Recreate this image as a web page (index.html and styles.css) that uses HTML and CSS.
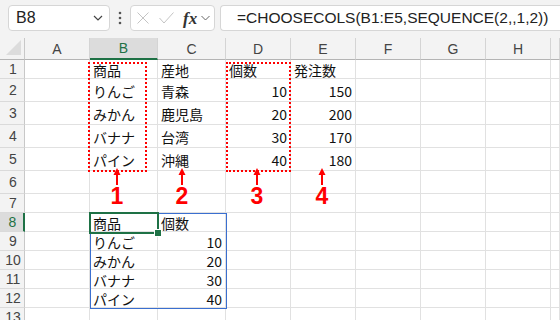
FILE: index.html
```html
<!DOCTYPE html>
<html>
<head>
    <title>CHOOSECOLS</title>
    <link rel="stylesheet" href="styles.css">
</head>
<body>
    <div class="app">
        <!-- formula bar -->
        <div class="formula-bar">
            <div class="name-box">
                <span>B8</span>
                <svg width="10" height="6" viewBox="0 0 10 6"><polyline points="1,1 5,5 9,1" fill="none" stroke="#444" stroke-width="1.2"/></svg>
            </div>
            <div class="grip">
                <svg width="4" height="14" viewBox="0 0 4 14"><circle cx="2" cy="2" r="1.3" fill="#555"/><circle cx="2" cy="7" r="1.3" fill="#555"/><circle cx="2" cy="12" r="1.3" fill="#555"/></svg>
            </div>
            <div class="fx-box">
                <svg class="icon-x" width="12" height="12" viewBox="0 0 12 12"><path d="M0.5 0.5 L11.5 11.5 M11.5 0.5 L0.5 11.5" stroke="#c4c4c4" stroke-width="1"/></svg>
                <svg class="icon-ok" width="15" height="12" viewBox="0 0 15 12"><polyline points="0.5,6 5,11 14.5,0.5" fill="none" stroke="#c4c4c4" stroke-width="1"/></svg>
                <span class="fx">fx</span>
                <svg width="9" height="6" viewBox="0 0 9 6"><polyline points="0.5,1 4.5,5 8.5,1" fill="none" stroke="#666" stroke-width="1"/></svg>
            </div>
            <div class="formula-input">=CHOOSECOLS(B1:E5,SEQUENCE(2,,1,2))</div>
        </div>

        <!-- sheet -->
        <div class="sheet">
            <div class="corner"><svg width="15" height="15" viewBox="0 0 15 15"><polygon points="15,0 15,15 0,15" fill="#dcdcdc"/></svg></div>
            <div class="ch">A</div><div class="ch ch-active">B</div><div class="ch">C</div><div class="ch">D</div><div class="ch">E</div><div class="ch">F</div><div class="ch">G</div><div class="ch">H</div><div class="ch"></div>

            <div class="rh">1</div><div class="cell"></div><div class="cell">商品</div><div class="cell">産地</div><div class="cell">個数</div><div class="cell">発注数</div><div class="cell"></div><div class="cell"></div><div class="cell"></div><div class="cell"></div>
            <div class="rh">2</div><div class="cell"></div><div class="cell">りんご</div><div class="cell">青森</div><div class="cell num">10</div><div class="cell num">150</div><div class="cell"></div><div class="cell"></div><div class="cell"></div><div class="cell"></div>
            <div class="rh">3</div><div class="cell"></div><div class="cell">みかん</div><div class="cell">鹿児島</div><div class="cell num">20</div><div class="cell num">200</div><div class="cell"></div><div class="cell"></div><div class="cell"></div><div class="cell"></div>
            <div class="rh">4</div><div class="cell"></div><div class="cell">バナナ</div><div class="cell">台湾</div><div class="cell num">30</div><div class="cell num">170</div><div class="cell"></div><div class="cell"></div><div class="cell"></div><div class="cell"></div>
            <div class="rh">5</div><div class="cell"></div><div class="cell">パイン</div><div class="cell">沖縄</div><div class="cell num">40</div><div class="cell num">180</div><div class="cell"></div><div class="cell"></div><div class="cell"></div><div class="cell"></div>
            <div class="rh">6</div><div class="cell"></div><div class="cell"></div><div class="cell"></div><div class="cell"></div><div class="cell"></div><div class="cell"></div><div class="cell"></div><div class="cell"></div><div class="cell"></div>
            <div class="rh">7</div><div class="cell"></div><div class="cell"></div><div class="cell"></div><div class="cell"></div><div class="cell"></div><div class="cell"></div><div class="cell"></div><div class="cell"></div><div class="cell"></div>
            <div class="rh rh-active">8</div><div class="cell"></div><div class="cell">商品</div><div class="cell">個数</div><div class="cell"></div><div class="cell"></div><div class="cell"></div><div class="cell"></div><div class="cell"></div><div class="cell"></div>
            <div class="rh">9</div><div class="cell"></div><div class="cell">りんご</div><div class="cell num">10</div><div class="cell"></div><div class="cell"></div><div class="cell"></div><div class="cell"></div><div class="cell"></div><div class="cell"></div>
            <div class="rh">10</div><div class="cell"></div><div class="cell">みかん</div><div class="cell num">20</div><div class="cell"></div><div class="cell"></div><div class="cell"></div><div class="cell"></div><div class="cell"></div><div class="cell"></div>
            <div class="rh">11</div><div class="cell"></div><div class="cell">バナナ</div><div class="cell num">30</div><div class="cell"></div><div class="cell"></div><div class="cell"></div><div class="cell"></div><div class="cell"></div><div class="cell"></div>
            <div class="rh">12</div><div class="cell"></div><div class="cell">パイン</div><div class="cell num">40</div><div class="cell"></div><div class="cell"></div><div class="cell"></div><div class="cell"></div><div class="cell"></div><div class="cell"></div>
            <div class="rh">13</div><div class="cell"></div><div class="cell"></div><div class="cell"></div><div class="cell"></div><div class="cell"></div><div class="cell"></div><div class="cell"></div><div class="cell"></div><div class="cell"></div>

            <!-- annotations over the grid -->
            <div class="dotted-box box-b"></div>
            <div class="dotted-box box-d"></div>

            <div class="marker m1"><svg width="10" height="17" viewBox="0 0 10 17"><polygon points="5,0 1.5,7 8.5,7" fill="#ff0000"/><line x1="5" y1="5" x2="5" y2="17" stroke="#ff0000" stroke-width="2"/></svg><span>1</span></div>
            <div class="marker m2"><svg width="10" height="17" viewBox="0 0 10 17"><polygon points="5,0 1.5,7 8.5,7" fill="#ff0000"/><line x1="5" y1="5" x2="5" y2="17" stroke="#ff0000" stroke-width="2"/></svg><span>2</span></div>
            <div class="marker m3"><svg width="10" height="17" viewBox="0 0 10 17"><polygon points="5,0 1.5,7 8.5,7" fill="#ff0000"/><line x1="5" y1="5" x2="5" y2="17" stroke="#ff0000" stroke-width="2"/></svg><span>3</span></div>
            <div class="marker m4"><svg width="10" height="17" viewBox="0 0 10 17"><polygon points="5,0 1.5,7 8.5,7" fill="#ff0000"/><line x1="5" y1="5" x2="5" y2="17" stroke="#ff0000" stroke-width="2"/></svg><span>4</span></div>

            <div class="spill-range"></div>
            <div class="active-cell"><div class="fill-handle"></div></div>
        </div>
    </div>
</body>
</html>
```

FILE: styles.css
```css
body {
    margin: 0;
    padding: 0;
    background-color: #fff;
    font-family: "Noto Sans CJK JP", sans-serif;
}

.app {
    width: 560px;
    height: 320px;
    overflow: hidden;
}

/* formula bar */
.formula-bar {
    display: flex;
    height: 38px;
    box-sizing: border-box;
    padding: 5px 0 0 8px;
    background-color: #f3f3f3;
}

.name-box,
.fx-box,
.formula-input {
    height: 26px;
    box-sizing: border-box;
    border: 1px solid #d6d6d6;
    border-radius: 4px;
    background-color: #fff;
    display: flex;
    align-items: center;
}

.name-box {
    width: 102px;
    justify-content: space-between;
    padding: 0 6px 0 7px;
    font: 16px "Liberation Sans", Arial, sans-serif;
    color: #222;
}

.grip {
    width: 20px;
    height: 26px;
    display: flex;
    align-items: center;
    justify-content: center;
}

.fx-box {
    width: 85px;
    padding-left: 6px;
    margin-right: 5px;
}

.icon-x {
    margin-right: 10px;
}

.icon-ok {
    margin-right: 9px;
}

.fx {
    font: italic bold 17px "Liberation Serif", serif;
    color: #333;
    margin-right: 4px;
    line-height: 1;
}

.formula-input {
    flex: 1;
    border-right: none;
    border-radius: 4px 0 0 4px;
    padding-left: 16px;
    font: 15.5px "Liberation Sans", Arial, sans-serif;
    color: #222;
    white-space: nowrap;
}

/* sheet grid */
.sheet {
    position: relative;
    display: grid;
    grid-template-columns: 25px 65px 68px 68px 65px 65px 65px 65px 65px 1fr;
    grid-template-rows: 22px 19px 23px 23px 23px 23px 23px 19px 19px 19px 19px 19px 19px 19px;
}

.corner,
.ch,
.rh {
    background-color: #f3f3f3;
    box-sizing: border-box;
    display: flex;
    align-items: center;
    justify-content: center;
    font: 14px "Liberation Sans", Arial, sans-serif;
    color: #444;
}

.corner {
    align-items: flex-end;
    justify-content: flex-end;
    padding: 0 3px 4px 0;
    border-right: 1px solid #c8c8c8;
    border-bottom: 1px solid #b4b4b4;
}

.ch {
    border-right: 1px solid #d4d4d4;
    border-bottom: 1px solid #b4b4b4;
}

.ch-active {
    background-color: #dcdcdc;
    border-bottom: 2px solid #1e7145;
    color: #1e7145;
}

.rh {
    border-right: 1px solid #c8c8c8;
    border-bottom: 1px solid #dadada;
    padding-left: 2px;
}

.rh-active {
    background-color: #dcdcdc;
    border-right: 2px solid #1e7145;
    color: #1e7145;
}

.cell {
    box-sizing: border-box;
    border-right: 1px solid #e1e1e1;
    border-bottom: 1px solid #e1e1e1;
    display: flex;
    align-items: center;
    padding: 1px 3px 0 3px;
    font-size: 14px;
    line-height: 1;
    color: #111;
    white-space: nowrap;
    overflow: hidden;
}

.cell.num {
    justify-content: flex-end;
}

/* annotations */
.dotted-box {
    position: absolute;
    top: 24px;
    height: 110px;
    box-sizing: border-box;
    border: 2px dotted #ff0000;
}

.box-b {
    left: 88px;
    width: 59px;
}

.box-d {
    left: 226px;
    width: 65px;
}

.marker {
    position: absolute;
    top: 130px;
    width: 20px;
    display: flex;
    flex-direction: column;
    align-items: center;
}

.marker span {
    font: bold 23px "Liberation Sans", Arial, sans-serif;
    line-height: 1;
    color: #ff0000;
}

.m1 { left: 107px; }
.m2 { left: 172px; }
.m3 { left: 247px; }
.m4 { left: 312px; }

.spill-range {
    position: absolute;
    left: 90px;
    top: 175px;
    width: 137px;
    height: 96px;
    box-sizing: border-box;
    border: 1px solid #3a6fd0;
}

.active-cell {
    position: absolute;
    left: 89px;
    top: 174px;
    width: 70px;
    height: 22px;
    box-sizing: border-box;
    border: 2px solid #1e7145;
}

.fill-handle {
    position: absolute;
    right: -5px;
    bottom: -5px;
    width: 6px;
    height: 6px;
    background-color: #1e7145;
    border: 1px solid #fff;
}
```
